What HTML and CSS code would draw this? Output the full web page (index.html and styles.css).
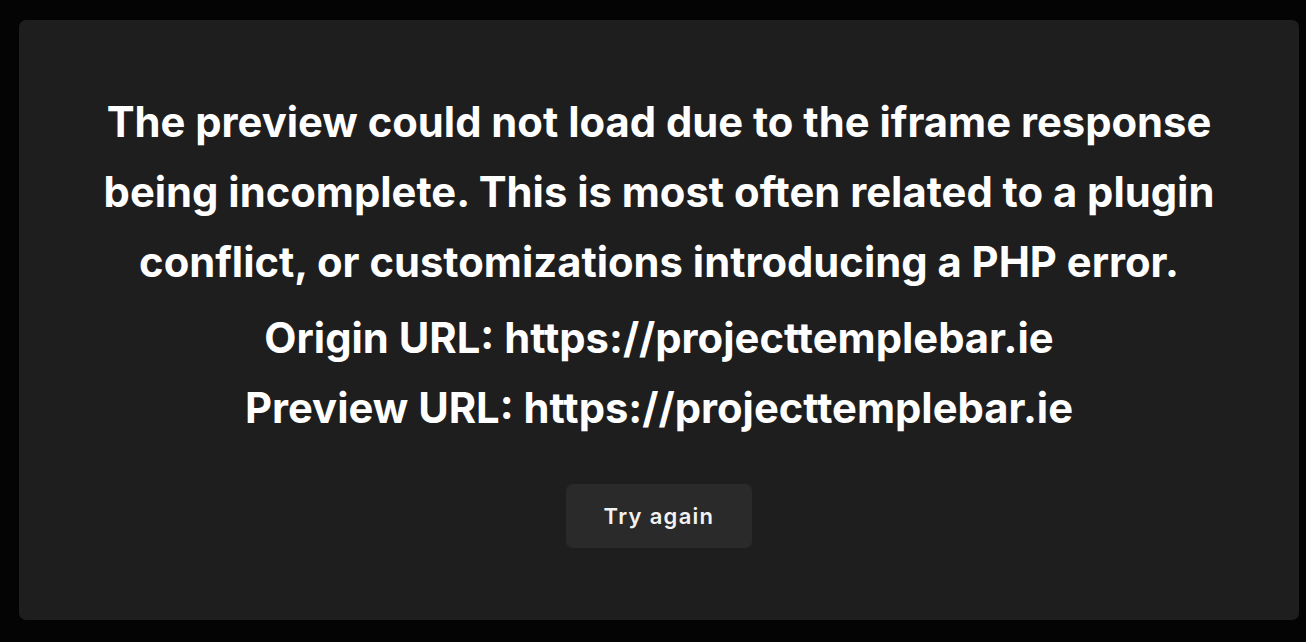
FILE: index.html
```html
<!DOCTYPE html>
<html lang="en">
<head>
    <meta charset="UTF-8">
    <title>Preview error</title>
    <link rel="stylesheet" href="styles.css">
</head>
<body>
    <div class="card">
        <div class="message">
            <p class="lead">The preview could not load due to the iframe response being incomplete. This is most often related to a plugin conflict, or customizations introducing a PHP error.</p>
            <p class="url">Origin URL: https://projecttemplebar.ie</p>
            <p class="url">Preview URL: https://projecttemplebar.ie</p>
        </div>
        <button class="retry">Try again</button>
    </div>
</body>
</html>
```

FILE: styles.css
```css
html, body {
    height: 100%;
}
body {
    margin: 0;
    background: #040404;
    font-family: 'Inter', 'Liberation Sans', sans-serif;
    padding: 20px 7px 22px 19px;
    box-sizing: border-box;
}
.card {
    height: 100%;
    background: #1e1e1e;
    border-radius: 7px;
    display: flex;
    flex-direction: column;
    align-items: center;
    justify-content: center;
    padding: 0 60px 6px;
    box-sizing: border-box;
}
.message {
    max-width: 1140px;
    text-align: center;
    color: #ffffff;
    font-size: 41.75px;
    font-weight: 700;
    line-height: 70px;
}
.message p {
    margin: 0;
}
.lead {
    margin-bottom: 6px !important;
}
.retry {
    margin-top: 41px;
    width: 186px;
    height: 64px;
    background: #2a2a2a;
    color: #f2f2f2;
    border: none;
    border-radius: 7px;
    font-family: inherit;
    font-size: 22px;
    font-weight: 600;
    letter-spacing: 1.3px;
    cursor: pointer;
}
```
